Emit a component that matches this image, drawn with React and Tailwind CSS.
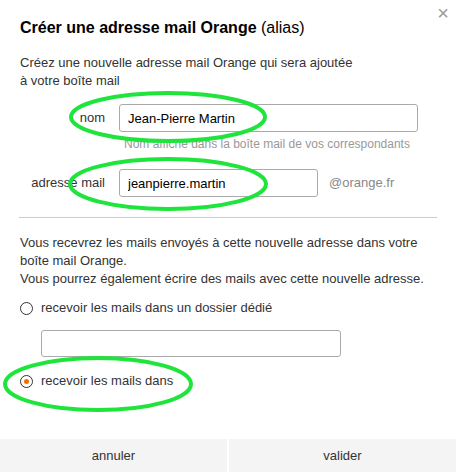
export default function App() {
  return (
    <div
      className="relative flex h-[472px] w-[456px] flex-col overflow-hidden bg-white text-[13px] text-[#333]"
      style={{ fontFamily: '"Liberation Sans", Arial, sans-serif' }}
    >
      <button className="absolute right-[7px] top-[1px] text-[20px] leading-[24px] text-[#999]">×</button>

      <div className="px-[20px] pt-[18px]">
        <h1 className="text-[16px] leading-[20px] text-black">
          <span className="font-bold">Créer une adresse mail Orange</span> (alias)
        </h1>

        <p className="mt-[16px] leading-[18px]">
          Créez une nouvelle adresse mail Orange qui sera ajoutée
          <br />à votre boîte mail
        </p>

        <div className="mt-[14px] flex items-center">
          <label className="w-[85px] text-right">nom</label>
          <input
            defaultValue="Jean-Pierre Martin"
            className="ml-[14px] h-[28px] w-[299px] rounded-[3px] border border-[#aaa] px-[8px] text-[13px] text-black outline-none"
          />
        </div>
        <p className="ml-[104px] mt-[5px] text-[12px] leading-[14px] text-[#999]">
          Nom affiché dans la boîte mail de vos correspondants
        </p>

        <div className="mt-[18px] flex items-center">
          <label className="w-[85px] text-right">adresse mail</label>
          <input
            defaultValue="jeanpierre.martin"
            className="ml-[14px] h-[28px] w-[199px] rounded-[3px] border border-[#aaa] px-[8px] text-[13px] text-black outline-none"
          />
          <span className="ml-[11px] text-[#888]">@orange.fr</span>
        </div>

        <div className="mt-[20px] mr-[-1px] ml-[-1px] border-t border-[#ccc]" />

        <p className="mt-[16px] leading-[18px]">
          Vous recevrez les mails envoyés à cette nouvelle adresse dans votre
          <br />
          boîte mail Orange.
          <br />
          Vous pourrez également écrire des mails avec cette nouvelle adresse.
        </p>

        <label className="mt-[11px] flex h-[18px] items-center">
          <span className="h-[13px] w-[13px] rounded-full border border-[#333]" />
          <span className="ml-[8px]">recevoir les mails dans un dossier dédié</span>
        </label>
        <input className="ml-[21px] mt-[13px] block h-[27px] w-[300px] rounded-[3px] border border-[#aaa] px-[8px] outline-none" />

        <label className="mt-[15px] flex h-[18px] items-center">
          <span className="flex h-[13px] w-[13px] items-center justify-center rounded-full border border-[#333]">
            <span className="h-[5px] w-[5px] rounded-full bg-[#f16e00]" />
          </span>
          <span className="ml-[8px]">recevoir les mails dans</span>
        </label>
      </div>

      <div className="mt-auto flex h-[33px] gap-[2px]">
        <button className="flex-1 bg-[#f4f4f4]">annuler</button>
        <button className="flex-1 bg-[#f4f4f4]">valider</button>
      </div>

      <svg className="pointer-events-none absolute inset-0" width="456" height="472" fill="none">
        <g stroke="#1ee43c" strokeWidth="4">
          <ellipse cx="168" cy="117" rx="97" ry="24" />
          <ellipse cx="168" cy="184" rx="98" ry="25" />
          <ellipse cx="98" cy="384" rx="93" ry="26" />
        </g>
      </svg>
    </div>
  )
}
